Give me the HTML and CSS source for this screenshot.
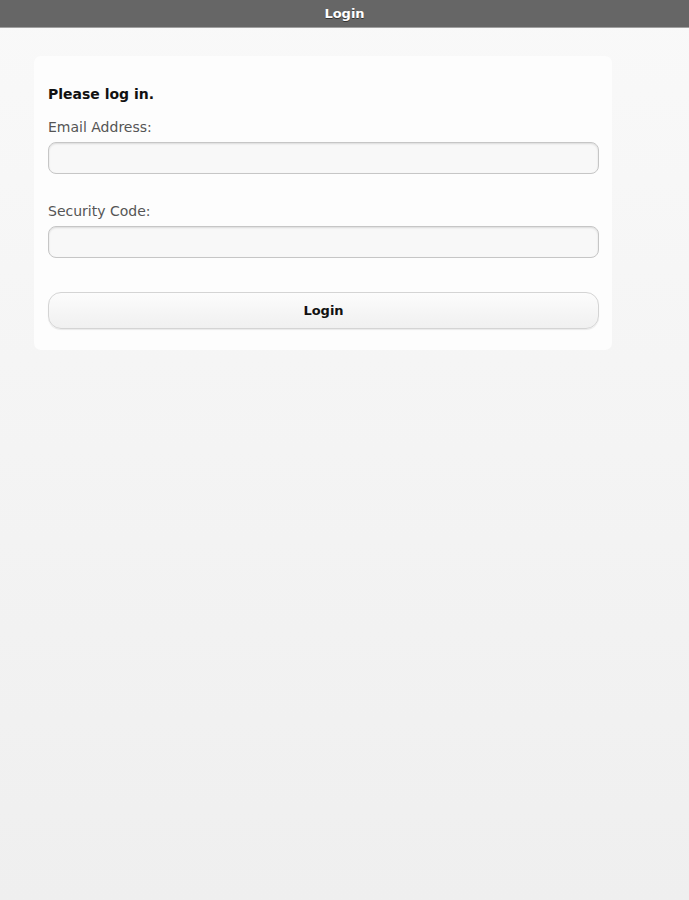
FILE: index.html
```html
<!DOCTYPE html>
<html>
<head>
<meta charset="utf-8">
<link rel="stylesheet" href="styles.css">
</head>
<body>
<header class="topbar">Login</header>
<main class="content">
  <form class="card">
    <h1 class="title">Please log in.</h1>
    <label class="label" for="email">Email Address:</label>
    <input class="field" id="email" type="text">
    <label class="label label-second" for="code">Security Code:</label>
    <input class="field" id="code" type="text">
    <button class="btn" type="button">Login</button>
  </form>
</main>
</body>
</html>
```
FILE: styles.css
```css
html, body {
  margin: 0;
  padding: 0;
}
body {
  min-height: 900px;
  background: linear-gradient(#f9f9f9, #efefef);
  font-family: "DejaVu Sans", Verdana, sans-serif;
}
.topbar {
  height: 27px;
  line-height: 28px;
  background: #666666;
  border-bottom: 1px solid #a0a0a0;
  color: #ffffff;
  text-align: center;
  font-size: 13px;
  font-weight: bold;
  text-shadow: 0 1px 0 #333;
}
.content {
  padding: 28px 77px 0 34px;
}
.card {
  background: #fdfdfd;
  border-radius: 7px;
  padding: 29px 13px 21px 14px;
  display: flex;
  flex-direction: column;
}
.title {
  margin: 0;
  font-size: 14px;
  font-weight: bold;
  color: #111;
  line-height: 18px;
}
.label {
  margin-top: 15px;
  font-size: 14px;
  color: #555;
  line-height: 18px;
}
.label-second {
  margin-top: 28px;
}
.field {
  margin-top: 6px;
  height: 32px;
  box-sizing: border-box;
  border: 1px solid #c6c6c6;
  border-radius: 8px;
  background: #f8f8f8;
  box-shadow: inset 0 1px 2px rgba(0,0,0,0.12);
  outline: none;
}
.btn {
  margin-top: 34px;
  height: 37px;
  border: 1px solid #d4d4d4;
  border-radius: 13px;
  background: linear-gradient(#fcfcfc, #f0f0f0);
  box-shadow: 0 1px 1px rgba(0,0,0,0.08);
  font-family: "DejaVu Sans", Verdana, sans-serif;
  font-size: 13px;
  font-weight: bold;
  color: #111;
}
```
